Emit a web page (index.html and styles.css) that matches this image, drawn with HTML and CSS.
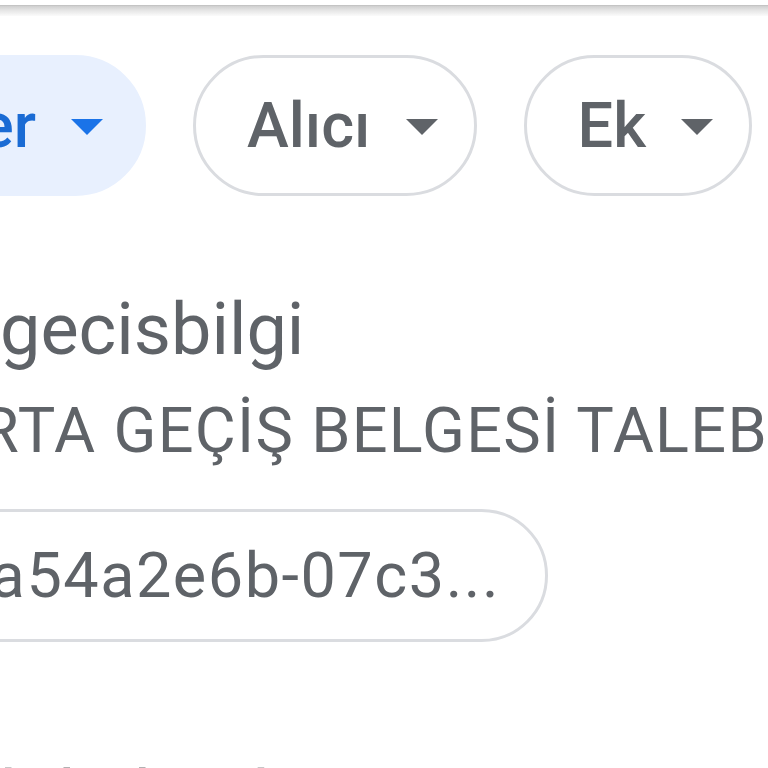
FILE: index.html
```html
<!DOCTYPE html>
<html lang="tr">
<head>
<meta charset="utf-8">
<title>Arama</title>
<link rel="stylesheet" href="styles.css">
</head>
<body>
<div class="topbar"><div class="shadow"></div></div>
<div class="chips">
  <div class="chip active"><span class="label">Etiketler</span><span class="arrow"></span></div>
  <div class="chip"><span class="label">Alıcı</span><span class="arrow"></span></div>
  <div class="chip"><span class="label">Ek</span><span class="arrow"></span></div>
</div>
<div class="sender">gecisbilgi</div>
<div class="subject">RTA GEÇİŞ BELGESİ TALEBİ</div>
<div class="idrow"><div class="idchip">a54a2e6b-07c3...</div></div>
<div class="next">bilgilendirme</div>
</body>
</html>
```

FILE: styles.css
```css
html, body {
  margin: 0;
  padding: 0;
  background: #ffffff;
}
body {
  width: 768px;
  height: 768px;
  overflow: hidden;
  font-family: Roboto, "Noto Sans", sans-serif;
  color: #5f6368;
}
.topbar {
  height: 5px;
  background: #ffffff;
}
.shadow {
  position: relative;
  top: 5px;
  height: 10px;
  border-top: 1px solid #c4c4c4;
  background: linear-gradient(#cfcfcf, #e6e6e6 45%, #fbfbfb);
}
.chips {
  margin-top: 50px;
  width: 768px;
  box-sizing: border-box;
  padding-right: 16px;
  display: flex;
  justify-content: flex-end;
  gap: 47px;
}
.chip {
  flex-shrink: 0;
  height: 141px;
  box-sizing: border-box;
  border: 3px solid #dadce0;
  border-radius: 71px;
  padding: 0 36px 0 51px;
  display: flex;
  align-items: center;
  gap: 35px;
  font-size: 63px;
  font-weight: 500;
  color: #5f6368;
  white-space: nowrap;
}
.chip .label {
  line-height: 74px;
}
.arrow {
  width: 0;
  height: 0;
  border-left: 16px solid transparent;
  border-right: 16px solid transparent;
  border-top: 16px solid #5f6368;
  margin-top: 2px;
}
.chip.active {
  background: #e8f0fe;
  border-color: #e8f0fe;
  color: #1a6bd4;
  padding-right: 40px;
}
.chip.active .arrow {
  border-top-color: #1a73e8;
}
.sender {
  margin-top: 92px;
  font-size: 72px;
  line-height: 84px;
  white-space: nowrap;
  color: #5f6368;
}
.subject {
  margin-top: 22px;
  margin-left: -20px;
  font-size: 63px;
  line-height: 74px;
  letter-spacing: 1.3px;
  white-space: nowrap;
  color: #5f6368;
}
.idrow {
  margin-top: 41px;
  width: 548px;
  display: flex;
  justify-content: flex-end;
}
.idchip {
  flex-shrink: 0;
  height: 133px;
  box-sizing: border-box;
  border: 3px solid #dadce0;
  border-radius: 67px;
  padding: 0 45px 0 60px;
  display: flex;
  align-items: center;
  font-size: 63px;
  line-height: 74px;
  letter-spacing: 1.5px;
  white-space: nowrap;
  color: #5f6368;
}
.next {
  margin-top: 114px;
  font-size: 72px;
  line-height: 84px;
  color: #202124;
  white-space: nowrap;
}
```
